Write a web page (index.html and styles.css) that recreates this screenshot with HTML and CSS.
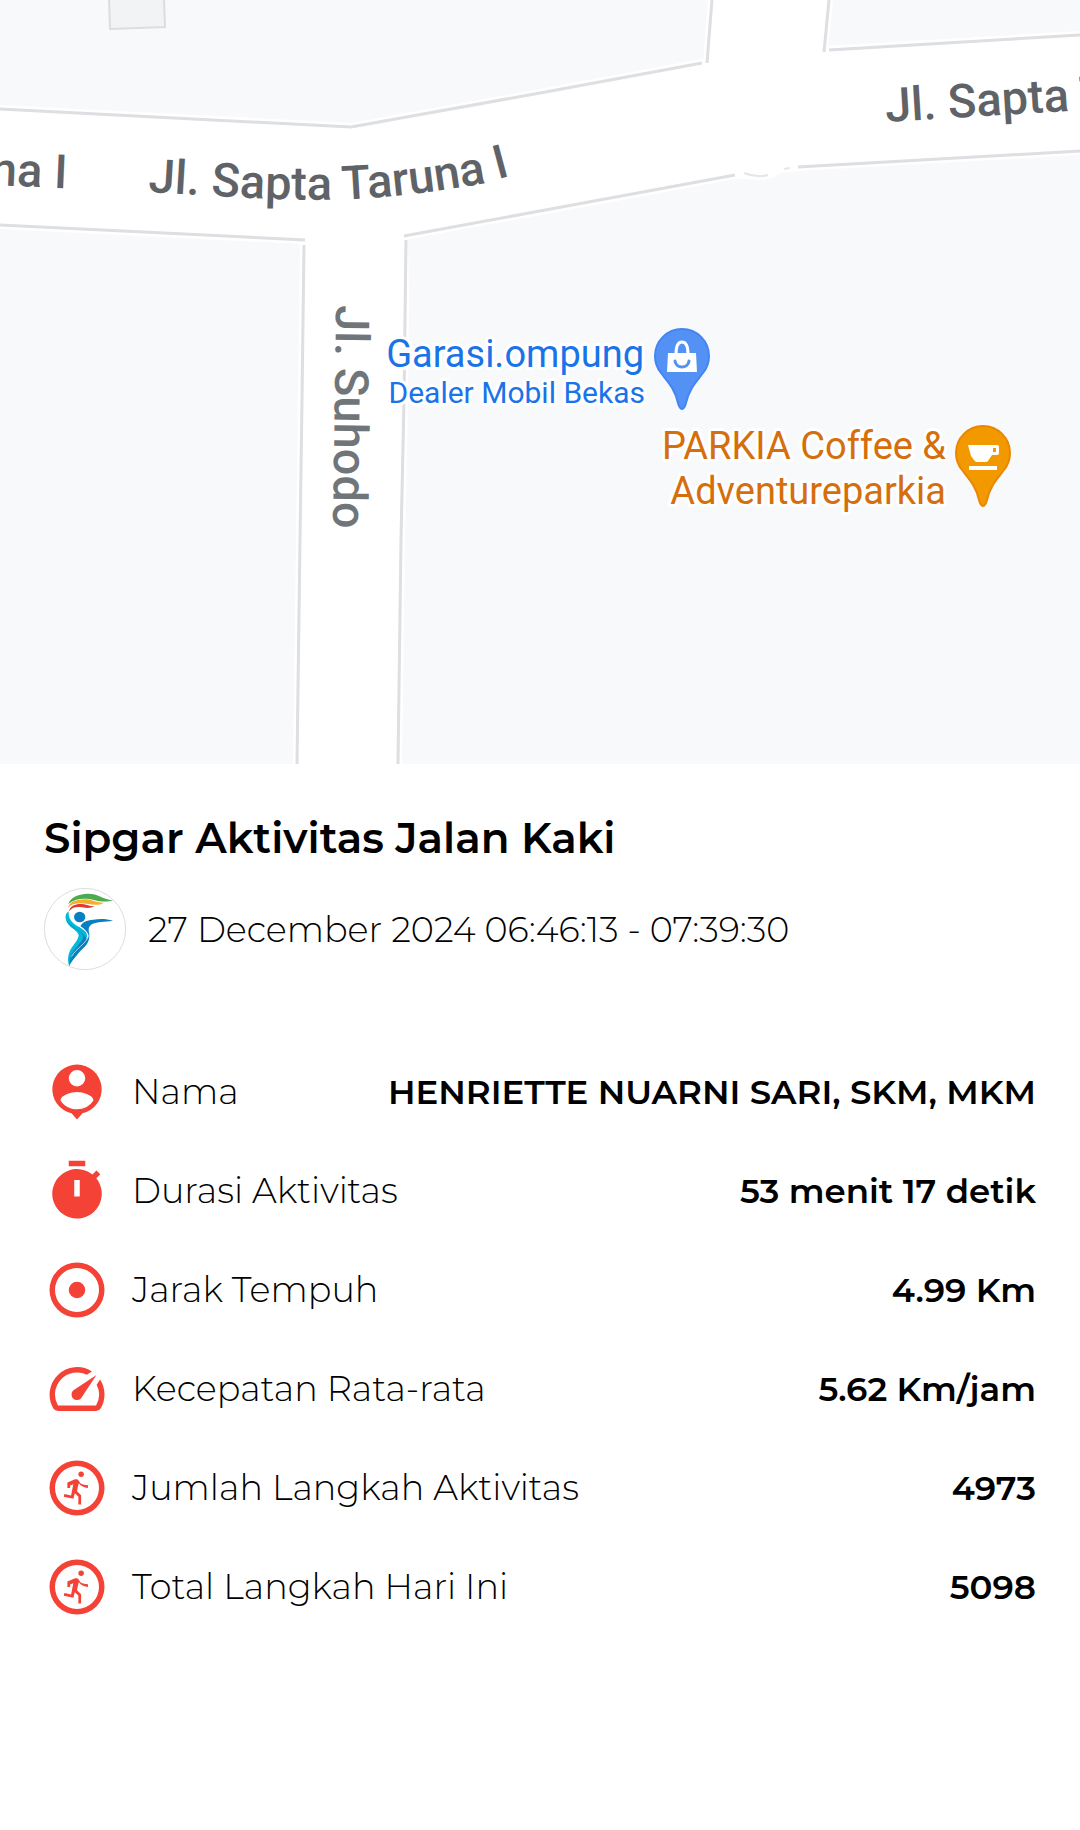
FILE: index.html
```html
<!DOCTYPE html>
<html lang="id">

<head>
    <meta charset="UTF-8">
    <meta name="viewport" content="width=device-width, initial-scale=1.0">
    <title>Sipgar Aktivitas Jalan Kaki</title>
    <link rel="stylesheet" href="styles.css">
</head>

<body>
    <svg class="map" viewBox="0 0 1080 764" role="img" aria-label="Peta">
        <defs>
            <path id="road-left" d="M-262 174L200 194" />
            <path id="road-main" d="M148 192L230 197Q300 201 355 199Q420 195 480 184L540 168" />
            <path id="road-right" d="M886 122L1300 97" />
            <path id="road-down" d="M336 305L332 600" />
            <path id="pin" d="M0 53C-2 53-3 51-4 47C-7 33-14 26-21 17C-25 12-27 6-27 0A27 27 0 0 1 27 0C27 6 25 12 21 17C14 26 7 33 4 47C3 51 2 53 0 53Z" />
        </defs>

        <!-- building and blocks -->
        <path class="building" d="M109 -2L110 29L165 27L164 -2" />
        <path class="road" d="M0 109L351 127L540 93L702 63L707 62L712 0H829L824 50L1080 35V151L798 167L780 169C772 175 760 178 748 175L735 175L540 211L404 236L405 300L404 400L401 540L398 764H297L300 540L302 400L304 240L0 225Z" />
        <g class="road-edge">
            <path d="M0 109L351 127L540 93L702 63" />
            <path d="M707 63L712 0" />
            <path d="M829 0L824 52" />
            <path d="M829 50L1080 35" />
            <path d="M0 225L305 240" />
            <path d="M404 236L540 211L735 175" />
            <path d="M798 167L1080 151" />
            <path d="M304 245L302 400L300 540L297 764" />
            <path d="M406 240L404 400L401 540L398 764" />
        </g>
        <path class="road-bump" d="M744 173Q756 178 768 175M784 169L790 168" />

        <!-- street names -->
        <text class="street" text-anchor="end"><textPath href="#road-left" startOffset="329">Jl. Sapta Taruna I</textPath></text>
        <text class="street"><textPath href="#road-main">Jl. Sapta Taruna I</textPath></text>
        <text class="street"><textPath href="#road-right">Jl. Sapta Taruna I</textPath></text>
        <text class="street street-small"><textPath href="#road-down">Jl. Suhodo</textPath></text>

        <!-- places -->
        <text class="place shop" x="644" y="367">Garasi.ompung</text>
        <text class="place shop place-type" x="645" y="403">Dealer Mobil Bekas</text>
        <g transform="translate(682 356)">
            <use class="pin-shop" href="#pin" />
            <path fill="#fff" d="M-14 -3H14L15 16H-15Z" />
            <path class="bag-handle" d="M-6 -2C-6 -10-4 -14 0 -14S6 -10 6 -2" />
            <path class="bag-smile" d="M-7 5C-6 13 6 13 7 5" />
        </g>
        <text class="place cafe" x="946" y="459">PARKIA Coffee &amp;</text>
        <text class="place cafe" x="946" y="504">Adventureparkia</text>
        <g transform="translate(983 453)">
            <use class="pin-cafe" href="#pin" />
            <path fill="#fff" fill-rule="evenodd" d="M-15 -8H14Q16 -8 16 -6V0Q16 2 14 2H9L5 8Q4 9 3 9H-6Q-8 9-9 7L-12 3ZM10 -5V-1H13V-5ZM-14 13H14V17H-14Z" />
        </g>
    </svg>

    <main class="activity">
        <h1 class="title">Sipgar Aktivitas Jalan Kaki</h1>

        <div class="date">
            <svg class="logo" viewBox="42 54 246 246" aria-hidden="true">
                <circle cx="165" cy="177" r="122" fill="#fff" stroke="#ccc" stroke-width="2" />
                <path fill="#4bab4d" d="M115 102C120 84 142 72 174 71C206 71 214 87 249 91C232 97 212 95 192 90C160 82 135 86 115 102Z" />
                <path fill="#f6ae2d" d="M114 113C118 95 142 87 168 88C188 90 198 98 222 98C207 107 191 105 174 102C148 98 127 99 114 113Z" />
                <path fill="#df3b32" d="M117 124C120 107 136 101 156 102C171 103 177 109 194 109C180 116 170 114 156 112C138 109 126 112 117 124Z" />
                <path fill="#00b9d6" d="M116 124C103 132 105 149 114 162C124 176 142 181 146 196C146 209 130 224 121 240C113 256 113 272 117 286C122 257 153 234 169 207C177 190 164 180 143 169C126 159 114 146 116 124Z" />
                <path fill="#087fc0" d="M108 143C110 156 119 167 137 177C152 185 162 191 158 207C145 229 120 250 118 272C127 251 151 228 170 209C164 190 144 180 130 171C118 162 110 154 108 143Z" />
                <ellipse cx="149" cy="141" rx="17" ry="16" fill="#087fc0" />
                <path fill="#087fc0" d="M151 169C157 156 169 151 190 149C212 146 230 147 249 152C223 156 202 154 187 162C174 170 175 179 178 193C180 220 164 230 144 251C132 266 123 276 117 289C116 252 163 225 175 198C174 187 161 175 151 169Z" />
                <path fill="none" stroke="#fff" stroke-width="2" d="M143 165C158 175 174 185 175 199C170 219 136 238 124 260" />
            </svg>
            <time datetime="2024-12-27T06:46:13">27 December 2024 06:46:13 - 07:39:30</time>
        </div>

        <dl class="stats">
            <div class="row">
                <dt>
                    <svg class="icon" viewBox="0 0 24 24" aria-hidden="true"><path d="M12 2a9 9 0 0 0-2 17.77L12 22l2-2.23A9 9 0 0 0 12 2zm0 2a3 3 0 1 1 0 6 3 3 0 0 1 0-6zm0 14.3c-2.500 0-4.710-1.280-6-3.220.030-1.990 4-3.080 6-3.080s5.970 1.090 6 3.080a7.200 7.200 0 0 1-6 3.220z" /></svg>
                    Nama
                </dt>
                <dd>HENRIETTE NUARNI SARI, SKM, MKM</dd>
            </div>
            <div class="row">
                <dt>
                    <svg class="icon" viewBox="0 0 24 24" aria-hidden="true"><path d="M15 1H9v2h6V1zm4.030 6.390 1.420-1.420c-.430-.510-.900-.990-1.410-1.410l-1.420 1.420A9 9 0 1 0 19.030 7.390zM13 14h-2V8h2v6z" /></svg>
                    Durasi Aktivitas
                </dt>
                <dd>53 menit 17 detik</dd>
            </div>
            <div class="row">
                <dt>
                    <svg class="icon" viewBox="0 0 24 24" aria-hidden="true"><path d="M12 2a10 10 0 1 0 0 20 10 10 0 0 0 0-20zm0 18a8 8 0 1 1 0-16 8 8 0 0 1 0 16zm3-8a3 3 0 1 1-6 0 3 3 0 0 1 6 0z" /></svg>
                    Jarak Tempuh
                </dt>
                <dd>4.99 Km</dd>
            </div>
            <div class="row">
                <dt>
                    <svg class="icon" viewBox="0 0 24 24" aria-hidden="true"><path d="m20.380 8.570-1.230 1.850a8 8 0 0 1-.220 7.580H5.070A8 8 0 0 1 15.580 6.850l1.850-1.230A10 10 0 0 0 3.350 19a2 2 0 0 0 1.720 1h13.850a2 2 0 0 0 1.740-1 10 10 0 0 0-.270-10.440zm-9.790 6.840a2 2 0 0 0 2.830 0l5.660-8.490-8.490 5.660a2 2 0 0 0 0 2.830z" /></svg>
                    Kecepatan Rata-rata
                </dt>
                <dd>5.62 Km/jam</dd>
            </div>
            <div class="row">
                <dt>
                    <svg class="icon" viewBox="0 0 24 24" aria-hidden="true"><path d="M12 2a10 10 0 1 0 0 20 10 10 0 0 0 0-20zm0 18a8 8 0 1 1 0-16 8 8 0 0 1 0 16z" /><circle cx="13.500" cy="7" r="1" /><path d="M15.990 10.990V12c-1.400 0-2.600-.700-3.300-1.700l-.3.900-.4 2 1.500 1.400V18h-1v-2.900l-1.300-1.200-.5 2-3.490-.7.200-1 2.450.5.800-4.100-1.150.45V12h-1V10l2.600-1.100c.600-.150 1.200-.050 1.550.500l.5.800c.550.500 1.500.790 2.840.790z" /></svg>
                    Jumlah Langkah Aktivitas
                </dt>
                <dd>4973</dd>
            </div>
            <div class="row">
                <dt>
                    <svg class="icon" viewBox="0 0 24 24" aria-hidden="true"><path d="M12 2a10 10 0 1 0 0 20 10 10 0 0 0 0-20zm0 18a8 8 0 1 1 0-16 8 8 0 0 1 0 16z" /><circle cx="13.500" cy="7" r="1" /><path d="M15.990 10.990V12c-1.400 0-2.600-.700-3.300-1.700l-.3.900-.4 2 1.500 1.400V18h-1v-2.900l-1.300-1.200-.5 2-3.490-.7.200-1 2.450.5.800-4.100-1.150.45V12h-1V10l2.600-1.100c.600-.150 1.200-.050 1.550.500l.5.800c.550.500 1.500.790 2.840.790z" /></svg>
                    Total Langkah Hari Ini
                </dt>
                <dd>5098</dd>
            </div>
        </dl>
    </main>
</body>

</html>
```

FILE: styles.css
```css
body {
    margin: 0;
    background-color: #fff;
    color: #000;
    font-family: Montserrat, Inter, sans-serif;
    font-size: 35px;
    font-weight: 300;
}

.map {
    display: block;
    width: 100%;
    height: auto;
    background-color: #f8f9fb;
    font-family: Roboto, sans-serif;
}

.building {
    fill: #f1f3f4;
    stroke: #dcdde0;
    stroke-width: 2;
}

.road {
    fill: #fff;
    stroke: #fff;
    stroke-width: 8;
}

.road-edge {
    fill: none;
    stroke: #dedee3;
    stroke-width: 3;
}

.road-bump {
    fill: none;
    stroke: #e6e6ea;
    stroke-width: 2;
}

.street {
    fill: #5f6368;
    font-size: 47px;
    font-weight: 500;
}

.street-small {
    fill: #70757a;
}

.place {
    font-size: 38px;
    font-weight: 400;
    text-anchor: end;
    paint-order: stroke;
    stroke: #fff;
    stroke-width: 6;
    stroke-linejoin: round;
}

.place-type {
    font-size: 30px;
}

.shop {
    fill: #1a73e8;
}

.cafe {
    fill: #d56e0c;
}

.pin-shop {
    fill: #5491f5;
    stroke: #4285f4;
    stroke-width: 2;
}

.pin-cafe {
    fill: #f29900;
    stroke: #ea8600;
    stroke-width: 2;
}

.bag-handle {
    fill: none;
    stroke: #fff;
    stroke-width: 3;
}

.bag-smile {
    fill: none;
    stroke: #5491f5;
    stroke-width: 3;
    stroke-linecap: round;
}

.activity {
    padding: 48px 44px;
}

.title {
    margin: 0;
    font-size: 42px;
    font-weight: 600;
    line-height: 52px;
}

.date {
    display: flex;
    align-items: center;
    gap: 22px;
    margin-top: 24px;
}

.logo {
    flex: none;
    width: 82px;
    height: 82px;
}

.stats {
    margin: 72px 0 0;
}

.row {
    display: flex;
    align-items: center;
    justify-content: space-between;
    min-height: 99px;
}

dt {
    display: flex;
    align-items: center;
    gap: 22px;
}

dd {
    margin: 0;
    font-size: 34px;
    font-weight: 600;
    text-align: right;
}

.icon {
    flex: none;
    width: 66px;
    height: 66px;
    fill: #f44336;
}
```
